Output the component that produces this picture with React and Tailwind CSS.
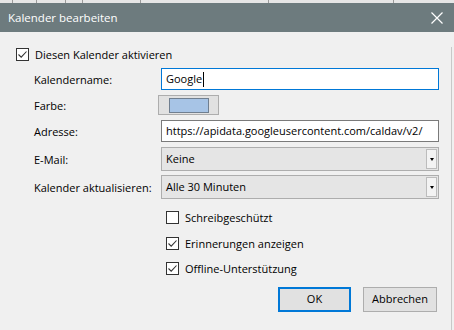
import React from "react";

const font = { fontFamily: '"Segoe UI", "Open Sans", "Noto Sans", sans-serif' };

function Box({ checked, className = "" }) {
  return (
    <span
      className={`flex h-[13px] w-[13px] shrink-0 items-center justify-center border border-[#333333] bg-white ${className}`}
    >
      {checked && (
        <svg width="11" height="11" viewBox="0 0 11 11">
          <path d="M1.5 5.5 L4.2 8.2 L9.5 2.5" fill="none" stroke="#333" strokeWidth="1.1" />
        </svg>
      )}
    </span>
  );
}

function CheckRow({ checked, label, className = "" }) {
  return (
    <div className={`flex h-[14px] items-center ${className}`}>
      <Box checked={checked} />
      <span className="ml-[6px] whitespace-nowrap leading-none">{label}</span>
    </div>
  );
}

function Select({ value }) {
  return (
    <div className="flex h-[24px] w-[278px] items-center border border-[#adadad] bg-[#e5e5e5] pl-[4px] pr-[1px]">
      <span className="flex-1">{value}</span>
      <span className="flex h-[20px] w-[11px] items-center justify-center border border-[#bcbcbc] bg-[#f3f3f3]">
        <span className="h-0 w-0 border-x-[2px] border-t-[3px] border-x-transparent border-t-black" />
      </span>
    </div>
  );
}

function Row({ label, children, className = "" }) {
  return (
    <div className={`flex items-center ${className}`}>
      <span className="w-[145px] shrink-0 whitespace-nowrap pl-[18px] leading-none">{label}</span>
      {children}
    </div>
  );
}

export default function App() {
  const topSegs = [12, 24, 29, 17, 58, 128, 125];
  return (
    <div className="h-[330px] w-[454px] overflow-hidden bg-[#f0f0f0] text-[11px] text-black" style={font}>
      {/* window behind */}
      <div className="flex h-[3px] bg-[#e6e6e6]">
        {topSegs.map((w, i) => (
          <div key={i} style={{ width: w }} className={i ? "border-l border-[#9a9a9a]" : ""} />
        ))}
        <div className="flex-1 border-l border-[#9a9a9a]" />
      </div>

      {/* title bar */}
      <div className="flex h-[29px] items-center justify-between bg-[#6d7b7e] pl-[8px] pr-[11px] text-[11.5px] text-white">
        <span>Kalender bearbeiten</span>
        <svg width="12" height="12" viewBox="0 0 12 12">
          <path d="M0.5 0.5 L11.5 11.5 M11.5 0.5 L0.5 11.5" stroke="#fff" strokeWidth="1.2" />
        </svg>
      </div>

      {/* body */}
      <div className="h-[291px] w-[452px] border-r border-b border-[#c8c8c8] pl-[16px]">
        <CheckRow checked label="Diesen Kalender aktivieren" className="mt-[15px]" />

        <Row label="Kalendername:" className="mt-[7px]">
          <div className="flex h-[22px] w-[278px] items-center border border-[#0078d7] bg-white pl-[4px]">
            <span>Google</span>
            <span className="ml-[1px] h-[15px] w-[1px] bg-black" />
          </div>
        </Row>

        <Row label="Farbe:" className="mt-[5px]">
          <div className="-ml-[3px] flex h-[20px] w-[61px] items-center justify-center border border-[#adadad] bg-[#e1e1e1]">
            <span className="h-[15px] w-[40px] border border-[#707f90] bg-[#a7c4e6]" />
          </div>
        </Row>

        <Row label="Adresse:" className="mt-[5px]">
          <div className="flex h-[22px] w-[278px] items-center overflow-hidden whitespace-nowrap border border-[#7a7a7a] bg-white pl-[4px]">
            https://apidata.googleusercontent.com/caldav/v2/
          </div>
        </Row>

        <Row label="E-Mail:" className="mt-[5px]">
          <Select value="Keine" />
        </Row>

        <Row label="Kalender aktualisieren:" className="mt-[4px]">
          <Select value="Alle 30 Minuten" />
        </Row>

        <div className="pl-[150px]">
          <CheckRow label="Schreibgeschützt" className="mt-[11px]" />
          <CheckRow checked label="Erinnerungen anzeigen" className="mt-[12px]" />
          <CheckRow checked label="Offline-Unterstützung" className="mt-[11px]" />
        </div>

        <div className="mt-[12px] flex justify-end gap-[12px] pr-[14px]">
          <button className="h-[25px] w-[73px] border-2 border-[#0078d7] bg-[#e1e1e1]">OK</button>
          <button className="h-[25px] w-[74px] border border-[#adadad] bg-[#e1e1e1]">Abbrechen</button>
        </div>
      </div>

      {/* window behind, bottom */}
      <div className="flex h-[6px] bg-[#dadada]">
        <div className="w-[82px] bg-[#a9aeae]" />
        <div className="w-[58px] border-l border-[#8f8f8f]" />
        <div className="w-[128px] border-l border-[#8f8f8f]" />
        <div className="w-[125px] border-l border-[#8f8f8f]" />
        <div className="flex-1 border-l border-[#8f8f8f]" />
      </div>
    </div>
  );
}
